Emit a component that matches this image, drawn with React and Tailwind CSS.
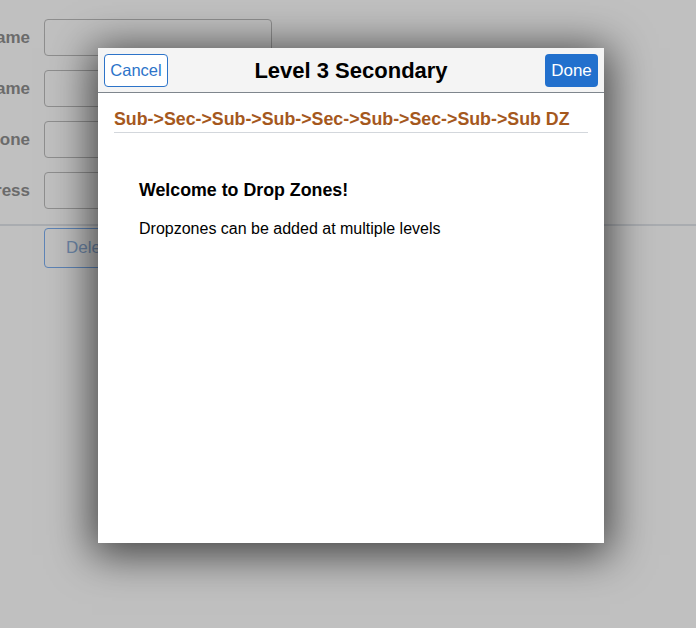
import React from "react";

export default function App() {
  const labels = ["Last Name", "First Name", "Phone", "Address"];
  return (
    <div className="relative w-[696px] h-[628px] overflow-hidden bg-[#c0c0c0] font-['Liberation_Sans',Arial,sans-serif]">
      {/* background page */}
      <div className="pt-[19px]">
        <div className="flex flex-col gap-[14px]">
          {labels.map((l, i) => (
            <div key={i} className="flex items-center h-[37px]">
              <div className="w-[30px] overflow-hidden flex justify-end">
                <span className="text-[17px] font-bold text-[#6b6b6b] whitespace-nowrap">{l}</span>
              </div>
              <div className="ml-[14px] w-[228px] h-[37px] rounded-[4px] border border-[#8e8e8e]" />
            </div>
          ))}
        </div>
        <div className="mt-[15px] h-[2px] bg-[#a9acb0]" />
        <div className="ml-[44px] mt-[2px] w-[120px] h-[40px] rounded-[4px] border border-[#5e84b6] flex items-center px-[21px] text-[17px] text-[#6e87a8]">
          Delete
        </div>
      </div>

      {/* dialog */}
      <div className="absolute left-[98px] top-[48px] w-[506px] h-[495px] bg-white shadow-[0_6px_40px_6px_rgba(0,0,0,0.65)] flex flex-col">
        <div className="h-[45px] bg-[#f4f4f4] border-b border-[#7f868d] flex items-center justify-between px-[6px] relative">
          <button className="h-[33px] w-[64px] rounded-[4px] border border-[#2d74c9] bg-white text-[#2d74c9] text-[16.5px] leading-none">
            Cancel
          </button>
          <div className="absolute left-0 right-0 text-center pointer-events-none text-[22px] font-bold text-black">
            Level 3 Secondary
          </div>
          <button className="h-[33px] w-[53px] rounded-[4px] bg-[#2270cd] text-white text-[17px] leading-none">
            Done
          </button>
        </div>
        <div className="px-[16px]">
          <div className="pt-[16px] pb-[2px] border-b border-[#d3d7dc] text-[17.8px] font-bold text-[#a5581d] leading-[21px] whitespace-nowrap">
            Sub-&gt;Sec-&gt;Sub-&gt;Sub-&gt;Sec-&gt;Sub-&gt;Sec-&gt;Sub-&gt;Sub DZ
          </div>
          <div className="pl-[25px] pt-[47px]">
            <div className="text-[17.8px] font-bold text-black leading-[21px]">Welcome to Drop Zones!</div>
            <div className="mt-[19px] text-[16px] text-black leading-[18px]">Dropzones can be added at multiple levels</div>
          </div>
        </div>
      </div>
    </div>
  );
}
